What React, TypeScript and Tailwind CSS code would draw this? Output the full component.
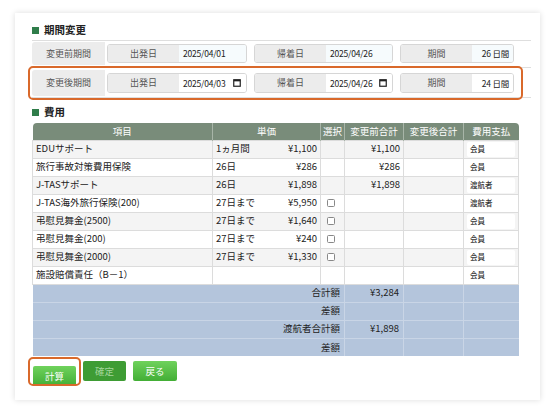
import React from 'react'

interface CostRow {
  name: string
  unit: string
  price: string
  check: boolean
  before: string
  pay: string
}

const costRows: CostRow[] = [
  { name: 'EDUサポート', unit: '1ヵ月間', price: '¥1,100', check: false, before: '¥1,100', pay: '会員' },
  { name: '旅行事故対策費用保険', unit: '26日', price: '¥286', check: false, before: '¥286', pay: '会員' },
  { name: 'J-TASサポート', unit: '26日', price: '¥1,898', check: false, before: '¥1,898', pay: '渡航者' },
  { name: 'J-TAS海外旅行保険(200)', unit: '27日まで', price: '¥5,950', check: true, before: '', pay: '渡航者' },
  { name: '弔慰見舞金(2500)', unit: '27日まで', price: '¥1,640', check: true, before: '', pay: '会員' },
  { name: '弔慰見舞金(200)', unit: '27日まで', price: '¥240', check: true, before: '', pay: '会員' },
  { name: '弔慰見舞金(2000)', unit: '27日まで', price: '¥1,330', check: true, before: '', pay: '会員' },
  { name: '施設賠償責任（B－1）', unit: '', price: '', check: false, before: '', pay: '会員' },
]

const summaryRows = [
  { label: '合計額', value: '¥3,284' },
  { label: '差額', value: '' },
  { label: '渡航者合計額', value: '¥1,898' },
  { label: '差額', value: '' },
]

function SectionTitle({ text }: { text: string }) {
  return (
    <div className="flex items-center h-[16px] gap-[5px]">
      <span className="w-[7px] h-[7px] bg-[#2f7d4a]"></span>
      <span className="text-[10.5px] font-bold text-[#222]">{text}</span>
    </div>
  )
}

function CalendarIcon() {
  return (
    <svg width="8" height="8" viewBox="0 0 8 8" className="shrink-0">
      <rect x="0.75" y="0.75" width="6.5" height="6.5" fill="none" stroke="#222" strokeWidth="1.2" />
      <rect x="0.75" y="0.75" width="6.5" height="1.6" fill="#222" />
    </svg>
  )
}

function Field({ label, value, valueWidth, tint, calendar, right }: { label: string; value: string; valueWidth: string; tint: boolean; calendar?: boolean; right?: boolean }) {
  return (
    <div className="flex h-full border border-[#d6d6d6] rounded-[3px] overflow-hidden">
      <div className="w-[71px] bg-[#ececec] flex items-center justify-center text-[9px] text-[#555]">{label}</div>
      <div className={`${valueWidth} ${tint ? 'bg-[#f6fbfd]' : 'bg-white'} flex items-center ${right ? 'justify-end pr-[4px]' : 'justify-between pl-[4px] pr-[5px]'} text-[8.5px] text-[#222] tracking-[-0.2px]`}>
        <span>{value}</span>
        {calendar && <CalendarIcon />}
      </div>
    </div>
  )
}

function PeriodRow({ label, start, end, days, editable }: { label: string; start: string; end: string; days: string; editable: boolean }) {
  return (
    <div className={`flex items-stretch gap-[2px] ${editable ? 'h-[26px]' : 'h-[23px]'}`}>
      <div className="w-[73px] bg-[#ececec] rounded-l-[3px] flex items-center justify-center text-[9px] text-[#555]">{label}</div>
      <div className={`flex gap-[7px] ${editable ? 'py-[3px]' : 'py-[2px]'}`}>
        <Field label="出発日" value={start} valueWidth="w-[67px]" tint={!editable} calendar={editable} />
        <Field label="帰着日" value={end} valueWidth="w-[66px]" tint={!editable} calendar={editable} />
        <Field label="期間" value={days} valueWidth="w-[41px]" tint={!editable} right />
      </div>
    </div>
  )
}

export default function App() {
  return (
    <div className="w-[555px] h-[418px] bg-white pt-[13px] pl-[15px]" style={{ fontFamily: '"Noto Sans CJK JP", "Noto Sans", sans-serif' }}>
      <div className="w-[525px] h-[387px] bg-white shadow-[0_0_6px_rgba(0,0,0,0.14)] pt-[9px] pl-[17px]">
        <SectionTitle text="期間変更" />
        <div className="w-[499px] mt-[2px]">
          <div className="border-t border-[#dedede] pt-[1px] h-[27px]">
            <PeriodRow label="変更前期間" start="2025/04/01" end="2025/04/26" days="26 日間" editable={false} />
          </div>
          <div className="relative border-t border-b border-[#dedede] pt-[2px] pb-[1px]">
            <PeriodRow label="変更後期間" start="2025/04/03" end="2025/04/26" days="24 日間" editable />
            <div className="absolute left-[-4px] top-[-2px] w-[495px] h-[34px] border-[2.5px] border-[#d9692b] rounded-[5px] pointer-events-none"></div>
          </div>
        </div>

        <div className="mt-[6px]">
          <SectionTitle text="費用" />
        </div>

        <table className="mt-[3px] w-[486px] table-fixed border-collapse text-[9.5px] text-[#222] leading-none">
          <colgroup>
            <col className="w-[180px]" />
            <col className="w-[108px]" />
            <col className="w-[24px]" />
            <col className="w-[59px]" />
            <col className="w-[60px]" />
            <col className="w-[55px]" />
          </colgroup>
          <thead>
            <tr className="bg-[#798c7a] text-white">
              {['項目', '単価', '選択', '変更前合計', '変更後合計', '費用支払'].map((h, i) => (
                <th key={h} className={`h-[17px] p-0 font-normal text-[9.5px] text-center ${i > 0 ? 'border-l border-[#a8b5a8]' : ''} ${i === 0 ? 'rounded-tl-[4px]' : ''} ${i === 5 ? 'rounded-tr-[4px]' : ''}`}>{h}</th>
              ))}
            </tr>
          </thead>
          <tbody>
            {costRows.map((r, i) => (
              <tr key={r.name} className={i % 2 === 0 ? 'bg-[#f4f4f4]' : 'bg-white'}>
                <td className="h-[18px] p-0 pl-[3px] border border-[#dcdcdc] whitespace-nowrap">{r.name}</td>
                <td className="h-[18px] p-0 px-[3px] border border-[#dcdcdc]">
                  <div className="flex justify-between">
                    <span>{r.unit}</span>
                    <span>{r.price}</span>
                  </div>
                </td>
                <td className="h-[18px] p-0 border border-[#dcdcdc]">
                  {r.check && <div className="ml-[6px] w-[8px] h-[8px] border border-[#888] rounded-[1.5px] bg-white"></div>}
                </td>
                <td className="h-[18px] p-0 pr-[3px] border border-[#dcdcdc] text-right">{r.before}</td>
                <td className="h-[18px] p-0 border border-[#dcdcdc]"></td>
                <td className="h-[18px] p-0 pl-[3px] pr-[3px] border border-[#dcdcdc]">
                  <div className="h-[15px] bg-white rounded-[2px] flex items-center pl-[3px] text-[7.5px] font-medium text-[#333]">{r.pay}</div>
                </td>
              </tr>
            ))}
            {summaryRows.map((s, i) => (
              <tr key={i} className="bg-[#b4c5dc]">
                <td colSpan={3} className="h-[18px] p-0 pr-[4px] text-right border-t border-[#c9d5e6]">{s.label}</td>
                <td className="h-[18px] p-0 pr-[4px] text-right border-t border-l border-[#c9d5e6]">{s.value}</td>
                <td className="h-[18px] p-0 border-t border-l border-[#c9d5e6]"></td>
                <td className="h-[18px] p-0 border-t border-l border-[#c9d5e6]"></td>
              </tr>
            ))}
          </tbody>
        </table>

        <div className="flex gap-[7px] mt-[5px] ml-[1px]">
          <div className="relative">
            <button className="w-[43px] h-[20px] rounded-[2px] bg-gradient-to-b from-[#6fd25c] to-[#42ae35] text-white text-[9.5px]">計算</button>
            <div className="absolute left-[-5px] top-[-4px] w-[53px] h-[29px] border-[2.5px] border-[#d9692b] rounded-[5px] pointer-events-none"></div>
          </div>
          <button className="w-[43px] h-[20px] rounded-[2px] bg-[#3e9c34] text-[#a3d59c] text-[9.5px]">確定</button>
          <button className="w-[44px] h-[20px] rounded-[2px] bg-gradient-to-b from-[#6fd25c] to-[#42ae35] text-white text-[9.5px]">戻る</button>
        </div>
      </div>
    </div>
  )
}
